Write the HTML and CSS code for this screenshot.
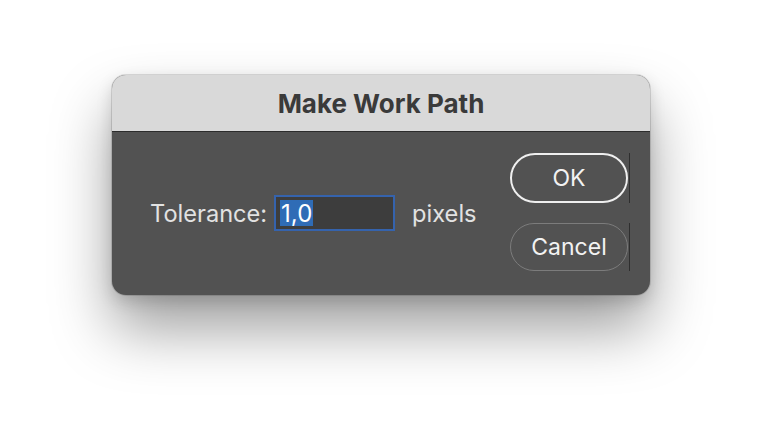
FILE: index.html
```html
<!DOCTYPE html>
<html>
<head>
<meta charset="utf-8">
<link rel="stylesheet" href="styles.css">
</head>
<body>
<div class="dialog">
  <div class="titlebar">Make Work Path</div>
  <div class="content">
    <div class="field-row">
      <span class="label">Tolerance:</span>
      <div class="input"><span class="sel">1,0</span></div>
      <span class="unit">pixels</span>
    </div>
    <div class="buttons">
      <div class="btn-wrap"><button class="btn btn-primary">OK</button></div>
      <div class="btn-wrap"><button class="btn btn-secondary">Cancel</button></div>
    </div>
  </div>
</div>
</body>
</html>
```

FILE: styles.css
```css
html, body {
  margin: 0;
  padding: 0;
  background: #ffffff;
  width: 762px;
  height: 443px;
  overflow: hidden;
  font-family: Inter, "Liberation Sans", Arial, sans-serif;
}
body {
  display: flex;
  justify-content: center;
  align-items: flex-start;
  padding-top: 75px;
  box-sizing: border-box;
}
.dialog {
  width: 538px;
  height: 220px;
  border-radius: 14px;
  overflow: hidden;
  display: flex;
  flex-direction: column;
  background: #525252;
  box-shadow: 0 0 0 1px rgba(0,0,0,0.12), 0 34px 60px rgba(0,0,0,0.38), 0 6px 16px rgba(0,0,0,0.15);
}
.titlebar {
  flex: none;
  background: #d9d9d9;
  border-bottom: 1px solid #2b2b2b;
  color: #3a3a3a;
  font-weight: 700;
  font-size: 26px;
  display: flex;
  align-items: center;
  justify-content: center;
  padding-top: 1px;
  box-sizing: border-box;
  height: 57px;
}
.content {
  flex: 1;
  display: flex;
  padding: 21px 22px 24px 38px;
}
.field-row {
  flex: 1;
  display: flex;
  align-items: center;
  color: #e2e2e2;
  font-size: 23.6px;
  padding-top: 2px;
}
.label {
  margin-right: 7px;
}
.input {
  width: 121px;
  height: 36px;
  box-sizing: border-box;
  border: 2px solid #3563ad;
  background: #3d3d3d;
  padding: 3px 5px 3px 4px;
  display: flex;
  align-items: stretch;
  margin-right: 17px;
}
.sel {
  background: #2f6cb6;
  color: #ffffff;
  padding: 0 1px;
  display: flex;
  align-items: center;
  font-size: 24px;
}
.buttons {
  display: flex;
  flex-direction: column;
  justify-content: space-between;
}
.btn-wrap {
  display: flex;
  align-items: stretch;
  border-right: 1px solid #2e2e2e;
  padding-right: 1px;
  margin-right: -2px;
}
.btn {
  width: 118px;
  height: 50px;
  border-radius: 25px;
  background: transparent;
  color: #f2f2f2;
  font-family: Inter, "Liberation Sans", Arial, sans-serif;
  font-size: 23px;
  box-sizing: border-box;
  padding: 0;
  cursor: default;
}
.btn-primary {
  border: 2px solid #efefef;
}
.btn-secondary {
  border: 1.5px solid #7c7c7c;
  height: 48px;
}
```
